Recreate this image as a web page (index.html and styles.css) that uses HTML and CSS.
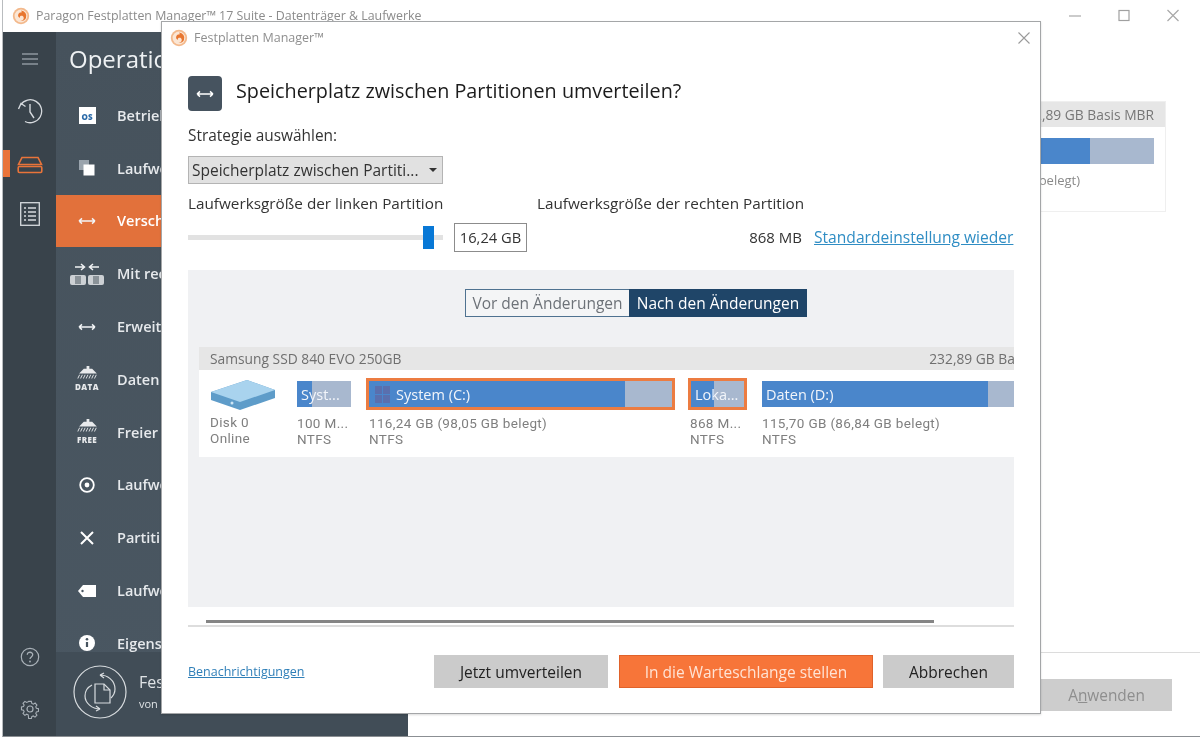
FILE: index.html
```html
<!DOCTYPE html>
<html lang="de">
<head>
<meta charset="utf-8">
<title>Paragon Festplatten Manager</title>
<link rel="stylesheet" href="styles.css">
</head>
<body>
<svg class="defs" width="0" height="0" aria-hidden="true">
  <symbol id="logo" viewBox="0 0 18 18">
    <circle cx="9" cy="9" r="8.2" fill="#f3b98c"/>
    <circle cx="9" cy="9" r="6.4" fill="#fbe6d4"/>
    <path d="M9 3.5a5.5 5.5 0 0 1 5 7.5c-1 2.2-3.400 3.400-5.500 3 2.500-.5 3.500-2 3.200-3.600-.3-1.300-1.500-2-2.700-1.600-1 .3-1.500 1.400-1 2.200-1.700-.5-2.300-2.200-1.700-3.700C6.800 6 8 5.200 10 5.300 9.500 4.600 9.300 4 9 3.500z" fill="#e8762f"/>
  </symbol>
  <symbol id="dbl" viewBox="0 0 18 8">
    <path d="M1 4h16M1 4l3-2.600M1 4l3 2.600M17 4l-3-2.600M17 4l-3 2.600" fill="none" stroke="currentColor" stroke-width="1.500"/>
  </symbol>
  <symbol id="hdd" viewBox="0 0 26 18">
    <path d="M5 1.500h16l3.500 7h-23z" fill="none" stroke="currentColor" stroke-width="1.600"/>
    <rect x="1.200" y="10.500" width="23.600" height="6" rx="1.200" fill="none" stroke="currentColor" stroke-width="1.600"/>
  </symbol>
  <symbol id="hatch" viewBox="0 0 22 14">
    <path d="M7 3h3V0h3v3h3l5 5H2z" fill="currentColor"/>
    <path d="M2 9.500l-2 4h1l2-4zm3 0l-2 4h1l2-4zm3 0l-2 4h1l2-4zm3 0l-2 4h1l2-4zm3 0l-2 4h1l2-4zm3 0l-2 4h1l2-4zm3 0l-2 4h1l2-4z" fill="currentColor"/>
  </symbol>
</svg>

<div class="desktop">
  <div class="window">
    <header class="titlebar">
      <svg class="logo"><use href="#logo"/></svg>
      <span class="titlebar-text">Paragon Festplatten Manager™ 17 Suite - Datenträger &amp; Laufwerke</span>
      <div class="win-controls">
        <svg width="16" height="16" viewBox="0 0 16 16"><path d="M2 8h12" stroke="#a8a8a8" stroke-width="1.200"/></svg>
        <svg width="16" height="16" viewBox="0 0 16 16"><rect x="3" y="2.500" width="10" height="10" fill="none" stroke="#a0a0a0" stroke-width="1.200"/></svg>
        <svg width="16" height="16" viewBox="0 0 16 16"><path d="M2.500 2l11 11M13.500 2l-11 11" stroke="#a8a8a8" stroke-width="1.200"/></svg>
      </div>
    </header>
    <div class="workspace">
      <nav class="rail">
        <svg class="rail-icon rail-menu" width="18" height="14" viewBox="0 0 18 14"><path d="M1 2h16M1 7h16M1 12h16" stroke="#8d979f" stroke-width="1.400"/></svg>
        <svg class="rail-icon rail-clock" width="26" height="26" viewBox="0 0 26 26"><path d="M3.500 7A11.500 11.500 0 1 1 8 23.500" fill="none" stroke="#d6dade" stroke-width="1.300"/><path d="M1.500 11L4 5.500l4.500 3M13 6v8l4 6" fill="none" stroke="#d6dade" stroke-width="1.400"/></svg>
        <div class="rail-active">
          <span class="rail-marker"></span>
          <svg class="rail-hdd"><use href="#hdd"/></svg>
        </div>
        <svg class="rail-icon rail-list" width="20" height="24" viewBox="0 0 20 24"><rect x=".7" y=".7" width="18.600" height="22.600" fill="none" stroke="#d6dade" stroke-width="1.300"/><path d="M4 6h2M8 6h8M4 10h2M8 10h8M4 14h2M8 14h8M4 18h2M8 18h8" stroke="#d6dade" stroke-width="1.500"/></svg>
        <div class="rail-spacer"></div>
        <svg class="rail-icon rail-help" width="20" height="20" viewBox="0 0 20 20"><circle cx="10" cy="10" r="8.700" fill="none" stroke="#a9b1b8" stroke-width="1.200"/><path d="M7.300 7.800c0-3.500 5.600-3.300 5.400 0 0 2.200-2.700 2-2.700 4.200" fill="none" stroke="#a9b1b8" stroke-width="1.300"/><circle cx="10" cy="14.500" r=".9" fill="#a9b1b8"/></svg>
        <svg class="rail-icon rail-gear" width="20" height="20" viewBox="0 0 20 20"><path d="M8.500 1.500h3l.5 2.300 1.700.8 2-1.200 2 2.200-1.300 1.900.7 1.700 2.300.5v3l-2.300.5-.7 1.700 1.300 2-2.100 2.100-2-1.300-1.600.7-.5 2.300h-3L8 16.500l-1.700-.7-2 1.300-2.100-2.100 1.300-2-.7-1.700-2.300-.5v-3l2.300-.5.7-1.700-1.300-1.900 2.100-2.200 2 1.200 1.700-.8z" transform="translate(1 1) scale(.9)" fill="none" stroke="#a9b1b8" stroke-width="1.200"/><circle cx="10" cy="10" r="3" fill="none" stroke="#a9b1b8" stroke-width="1.200"/></svg>
      </nav>
      <aside class="panel">
        <h1 class="panel-title">Operationen</h1>
        <ul class="op-list">
          <li class="op"><span class="op-icon"><span class="os-icon">OS</span></span><span>Betriebssystem</span></li>
          <li class="op"><span class="op-icon"><svg width="16" height="16" viewBox="0 0 16 16"><rect x="0" y="0" width="10" height="10" fill="#9aa4ad"/><rect x="4.500" y="4.500" width="11" height="11" fill="#fff"/></svg></span><span>Laufwerk</span></li>
          <li class="op op-active"><span class="op-icon"><svg class="dbl"><use href="#dbl"/></svg></span><span>Verschieben</span></li>
          <li class="op"><span class="op-icon"><svg width="36" height="22" viewBox="0 0 36 22"><path d="M6 4h9M12 1l3.500 3L12 7M30 4h-9M24 1l-3.500 3L24 7" fill="none" stroke="#f0f2f4" stroke-width="1.500"/><rect x="1" y="12" width="16" height="10" rx="2" fill="#ccd0d4"/><rect x="19" y="12" width="16" height="10" rx="2" fill="#ccd0d4"/><rect x="6" y="13" width="6" height="8" fill="#8a9298"/><rect x="24" y="13" width="6" height="8" fill="#8a9298"/></svg></span><span>Mit rechter</span></li>
          <li class="op"><span class="op-icon"><svg class="dbl"><use href="#dbl"/></svg></span><span>Erweitern</span></li>
          <li class="op"><span class="op-icon op-stack"><svg class="hatch"><use href="#hatch"/></svg><span class="op-tag">DATA</span></span><span>Daten</span></li>
          <li class="op"><span class="op-icon op-stack"><svg class="hatch"><use href="#hatch"/></svg><span class="op-tag">FREE</span></span><span>Freier</span></li>
          <li class="op"><span class="op-icon"><svg width="16" height="16" viewBox="0 0 16 16"><circle cx="8" cy="8" r="6.800" fill="none" stroke="#fff" stroke-width="1.800"/><circle cx="8" cy="8" r="2.400" fill="#fff"/></svg></span><span>Laufwerk</span></li>
          <li class="op"><span class="op-icon"><svg width="14" height="14" viewBox="0 0 14 14"><path d="M1 1l12 12M13 1L1 13" stroke="#fff" stroke-width="2"/></svg></span><span>Partition</span></li>
          <li class="op"><span class="op-icon"><svg width="18" height="12" viewBox="0 0 18 12"><path d="M5 0h13v12H5L0 6z" fill="#fff"/><circle cx="4.500" cy="6" r="1.200" fill="#4a5762"/></svg></span><span>Laufwerk</span></li>
          <li class="op"><span class="op-icon"><svg width="16" height="16" viewBox="0 0 16 16"><circle cx="8" cy="8" r="8" fill="#fff"/><path d="M8 7v5" stroke="#46535f" stroke-width="2.200"/><circle cx="8" cy="4.300" r="1.300" fill="#46535f"/></svg></span><span>Eigenschaften</span></li>
        </ul>
        <div class="panel-foot">
          <svg class="foot-icon" width="54" height="54" viewBox="0 0 54 54"><g fill="none" stroke="#d8dcdf" stroke-width="1.200"><circle cx="27" cy="27" r="26"/><path d="M22 19h9l6 6v13H22z"/><path d="M31 19v6h6"/><path d="M27 10c7 0 15 5 15 14 0 4-2 7-4 9M27 10l4-2M27 10l4 3"/><path d="M27 44c-8 0-15-6-15-13 0-5 3-9 7-11M27 44l-4 2M27 44l-4-3"/></g></svg>
          <div class="foot-text">
            <div class="foot-name">Fest</div>
            <div class="foot-by">von</div>
          </div>
        </div>
      </aside>
      <main class="content">
        <div class="content-top">
          <section class="bg-card">
            <div class="bg-card-head">232,89 GB Basis MBR</div>
            <div class="bg-bar"><span class="bg-bar-used"></span></div>
            <div class="bg-note">(86,84 GB belegt)</div>
          </section>
        </div>
        <footer class="content-foot">
          <button class="apply" type="button">A<u>n</u>wenden</button>
        </footer>
      </main>
    </div>
  </div>

  <div class="dialog">
    <div class="dialog-title">
      <svg class="logo"><use href="#logo"/></svg>
      <span>Festplatten Manager™</span>
      <svg class="dialog-close" width="14" height="14" viewBox="0 0 14 14"><path d="M1.500 1.500l11 11M12.500 1.500l-11 11" stroke="#9a9a9a" stroke-width="1.100"/></svg>
    </div>
    <div class="dialog-body">
      <div class="question">
        <span class="question-icon"><svg class="dbl"><use href="#dbl"/></svg></span>
        <h2>Speicherplatz zwischen Partitionen umverteilen?</h2>
      </div>
      <div class="strategy-label">Strategie auswählen:</div>
      <div class="select"><span>Speicherplatz zwischen Partiti...</span><i class="caret"></i></div>
      <div class="size-labels"><span class="size-left">Laufwerksgröße der linken Partition</span><span>Laufwerksgröße der rechten Partition</span></div>
      <div class="size-row">
        <div class="slider"><span class="thumb"></span></div>
        <div class="size-input">16,24 GB</div>
        <span class="size-right">868 MB</span>
        <a class="link">Standardeinstellung wieder</a>
      </div>
      <section class="preview">
        <div class="toggle">
          <span class="toggle-off">Vor den Änderungen</span><span class="toggle-on">Nach den Änderungen</span>
        </div>
        <div class="disk-view">
          <div class="disk-card">
            <div class="disk-head"><span>Samsung SSD 840 EVO 250GB</span><span>232,89 GB Basis MBR</span></div>
            <div class="disk-row">
              <div class="disk-cell">
                <svg class="disk-pic" width="66" height="32" viewBox="0 0 66 32"><path d="M1 13L37 1l28 10v8L30 31 1 21z" fill="#5e9cc9"/><path d="M1 13L37 1l28 10-35 12z" fill="#a9d3ee"/><circle cx="22" cy="24" r="1.500" fill="#cfe6f5"/></svg>
                <div class="cell-text"><div>Disk 0</div><div>Online</div></div>
              </div>
              <div class="part p1">
                <div class="bar"><span class="used u1"></span><span class="bar-label">Syst...</span></div>
                <div class="cell-text"><div>100 M...</div><div>NTFS</div></div>
              </div>
              <div class="part p2">
                <div class="bar sel"><span class="used u2"></span><svg class="win-mark" width="15" height="17" viewBox="0 0 15 17"><path d="M0 0h7v8H0zM8 0h7v8H8zM0 9h7v8H0zM8 9h7v8H8z" fill="#5a6fae"/></svg><span class="bar-label">System (C:)</span></div>
                <div class="cell-text"><div>116,24 GB (98,05 GB belegt)</div><div>NTFS</div></div>
              </div>
              <div class="part p3">
                <div class="bar sel"><span class="used u3"></span><span class="bar-label">Loka...</span></div>
                <div class="cell-text"><div>868 M...</div><div>NTFS</div></div>
              </div>
              <div class="part p4">
                <div class="bar"><span class="used u4"></span><span class="bar-label">Daten (D:)</span></div>
                <div class="cell-text"><div>115,70 GB (86,84 GB belegt)</div><div>NTFS</div></div>
              </div>
            </div>
          </div>
        </div>
      </section>
      <div class="scroll-track"><span class="scroll-thumb"></span></div>
      <div class="actions">
        <a class="notify">Benachrichtigungen</a>
        <button class="btn" type="button">Jetzt umverteilen</button>
        <button class="btn btn-primary" type="button">In die Warteschlange stellen</button>
        <button class="btn btn-cancel" type="button">Abbrechen</button>
      </div>
    </div>
  </div>
</div>
</body>
</html>
```
FILE: styles.css
```css
* { box-sizing: border-box; }
html, body { margin: 0; height: 100%; overflow: hidden; background: #fff; }
body { font-family: "Open Sans", "Noto Sans", "Liberation Sans", sans-serif; color: #333; }
.defs { position: absolute; }
.desktop { position: relative; width: 1200px; height: 737px; filter: blur(.45px); padding-left: 2px; }

.window { height: 737px; display: flex; flex-direction: column; background: #fff; border-left: 1px solid #b9bcbf; border-bottom: 1px solid #8b8f93; }
.titlebar { height: 32px; flex: none; display: flex; align-items: center; padding: 0 0 1px 9px; }
.logo { width: 18px; height: 18px; flex: none; }
.titlebar-text { margin-left: 6px; font-size: 12.400px; color: #8b8b8b; white-space: nowrap; }
.win-controls { margin-left: auto; display: flex; gap: 33px; padding-right: 19px; }

.workspace { flex: 1; display: flex; min-height: 0; }
.rail { width: 53px; flex: none; background: #39434b; display: flex; flex-direction: column; align-items: center; position: relative; }
.rail-icon { flex: none; }
.rail-menu { margin-top: 20px; }
.rail-clock { margin-top: 32px; }
.rail-active { width: 100%; height: 27px; margin-top: 26px; display: flex; align-items: center; justify-content: center; position: relative; flex: none; }
.rail-marker { position: absolute; left: 0; top: 0; width: 7px; height: 27px; background: #e9743a; }
.rail-hdd { width: 26px; height: 18px; color: #e9743a; margin-top: 2px; }
.rail-list { margin-top: 25px; }
.rail-spacer { flex: 1; }
.rail-help { margin-bottom: 32px; }
.rail-gear { margin-bottom: 17px; }

.panel { width: 352px; flex: none; display: flex; flex-direction: column; background: linear-gradient(#46525c, #4a5762); color: #fff; }
.panel-title { margin: 0; height: 57px; flex: none; padding: 9px 0 0 13px; font-size: 24px; line-height: 36px; font-weight: 400; color: #eef1f3; white-space: nowrap; }
.op-list { list-style: none; margin: 0; padding: 0; flex: 1; min-height: 0; overflow: hidden; }
.op { height: 52.800px; display: flex; align-items: center; padding-left: 12px; font-size: 14.500px; font-weight: 600; color: #e6e9ec; }
.op-active { background: #e2713b; color: #fff; }
.op-icon { width: 38px; flex: none; display: flex; align-items: center; justify-content: center; margin-right: 11px; color: #f2f4f6; }
.dbl { width: 18px; height: 8px; }
.os-icon { width: 17px; height: 17px; background: #fff; color: #2b6aa8; font-size: 8px; font-weight: 800; line-height: 20px; text-align: center; display: block; }
.op-stack { flex-direction: column; }
.hatch { width: 21px; height: 13px; color: #e8eaec; }
.op-tag { font-size: 8px; line-height: 10px; font-weight: 800; letter-spacing: .4px; color: #e8eaec; margin-top: 3px; }
.panel-foot { height: 84px; flex: none; display: flex; align-items: center; background: #414d57; padding-left: 17px; }
.foot-icon { flex: none; margin-top: -4px; }
.foot-text { margin-left: 12px; color: #dfe3e6; white-space: nowrap; margin-top: -4px; }
.foot-name { font-size: 16px; line-height: 26px; margin-top: -2px; }
.foot-by { font-size: 11px; line-height: 18px; }

.content { flex: 1; display: flex; flex-direction: column; min-width: 0; }
.content-top { height: 620px; flex: none; padding: 69px 34px 0 0; display: flex; justify-content: flex-end; }
.bg-card { width: 320px; height: 111px; border: 1px solid #efefef; font-size: 13.800px; color: #777; }
.bg-card-head { height: 25px; background: #e6e6e6; text-align: right; padding-right: 11px; line-height: 25px; white-space: nowrap; }
.bg-bar { height: 26px; margin: 11px 11px 0 0; background: #a8b8cf; }
.bg-bar-used { display: block; height: 100%; width: 243px; background: #4a86cb; }
.bg-note { text-align: right; margin: 7px 85px 0 0; font-size: 13px; color: #8a8a8a; }
.content-foot { flex: 1; border-top: 1px solid #dcdcdc; padding: 26px 28px 0 0; display: flex; justify-content: flex-end; align-items: flex-start; }
.apply { width: 300px; height: 32px; border: 0; background: #cdcdcd; color: #8e8e8e; font: 400 15.400px "Open Sans", sans-serif; padding: 0 0 0 169px; text-align: center; }

.dialog { position: absolute; left: 161px; top: 21px; width: 880px; height: 693px; background: #fff; border: 1px solid #a4a6a8; box-shadow: 0 1px 2px rgba(0,0,0,.15); display: flex; flex-direction: column; }
.dialog-title { height: 31px; flex: none; display: flex; align-items: center; padding-left: 8px; font-size: 12.500px; color: #8f8f8f; }
.dialog-title span { margin-left: 6px; }
.dialog-close { margin-left: auto; margin-right: 9px; }
.dialog-body { flex: 1; padding: 23px 26px 0; display: flex; flex-direction: column; min-height: 0; }
.question { display: flex; align-items: center; gap: 14px; height: 35px; flex: none; }
.question-icon { width: 34px; height: 35px; background: #46535f; border-radius: 4px; color: #fff; display: flex; align-items: center; justify-content: center; }
.question h2 { margin: 0 0 6px; font-size: 19.800px; line-height: 28px; font-weight: 400; color: #1c1c1c; white-space: nowrap; }
.strategy-label { margin-top: 14px; font-size: 15.400px; line-height: 22px; color: #333; flex: none; }
.select { width: 255px; height: 28px; margin-top: 9px; background: #e1e1e1; border: 1px solid #b4b4b4; display: flex; align-items: center; padding: 0 5px 0 3px; font-size: 15.500px; color: #333; flex: none; white-space: nowrap; }
.caret { margin-left: auto; width: 0; height: 0; border: 4px solid transparent; border-top: 4px solid #333; border-bottom: 0; }
.size-labels { display: flex; margin-top: 8px; font-size: 15.300px; line-height: 22px; color: #333; flex: none; white-space: nowrap; }
.size-left { width: 349px; }
.size-row { display: flex; align-items: center; height: 30px; margin-top: 8px; flex: none; }
.slider { width: 255px; height: 5px; background: #e2e2e2; position: relative; flex: none; }
.thumb { position: absolute; left: 235px; top: -9px; width: 11px; height: 23px; background: #0878d6; }
.size-input { width: 73px; height: 29px; margin-left: 11px; border: 1px solid #8c8c8c; font-size: 14.700px; line-height: 27px; text-align: center; color: #333; flex: none; }
.size-right { margin-left: auto; font-size: 15px; color: #333; }
.link { margin-left: 12px; width: 200px; font-size: 15.600px; color: #2f8dc4; text-decoration: underline; white-space: nowrap; }

.preview { height: 337px; margin-top: 18px; background: #f0f1f3; flex: none; display: flex; flex-direction: column; }
.toggle { align-self: flex-start; margin: 19px 0 0 277px; display: flex; height: 28px; font-size: 15.500px; line-height: 26px; flex: none; white-space: nowrap; }
.toggle-off { width: 164px; border: 1px solid #4f7290; border-right: 0; color: #6d7278; text-align: center; background: #f4f5f6; }
.toggle-on { width: 178px; background: #1f4568; color: #fff; text-align: center; line-height: 28px; }
.disk-view { margin: 30px 0 0 11px; overflow: hidden; flex: none; }
.disk-card { width: 877px; height: 110px; background: #fff; }
.disk-head { height: 23px; background: #e6e6e6; display: flex; justify-content: space-between; padding: 0 11px; font-size: 13.800px; line-height: 23px; color: #6f6f6f; white-space: nowrap; }
.disk-row { display: flex; padding-left: 11px; }
.disk-cell { width: 87px; flex: none; padding-top: 9px; }
.disk-pic { display: block; }
.disk-cell .cell-text { margin-top: 3px; margin-left: 0; }
.cell-text { font-family: Roboto, "Open Sans", sans-serif; font-size: 13.500px; letter-spacing: .35px; line-height: 16px; color: #7f7f7f; white-space: nowrap; }
.part { flex: none; padding-top: 8px; }
.p1 { width: 54px; margin-right: 15px; }
.p2 { width: 309px; margin-right: 13px; }
.p3 { width: 59px; margin-right: 15px; }
.p4 { width: 293px; }
.p2 .cell-text { margin-left: 3px; }
.p3 .cell-text { margin-left: 2px; }
.part .cell-text { margin-top: 5px; }
.bar { height: 32px; position: relative; background: #a8b8cf; display: flex; align-items: center; border-top: 3px solid #fff; border-bottom: 3px solid #fff; overflow: hidden; background-clip: padding-box; }
.bar.sel { border: 3px solid #ec7c41; background-clip: border-box; }
.used { position: absolute; left: 0; top: 0; bottom: 0; background: #4a86cb; }
.u1 { width: 15px; }
.u2 { width: 256px; }
.u3 { width: 23px; }
.u4 { width: 226px; }
.bar-label { position: relative; font-size: 14.500px; color: #f2f5fa; padding-left: 4px; white-space: nowrap; }
.p2 .bar-label { padding-left: 6px; }
.p4 .bar-label { padding-left: 4px; }
.win-mark { position: relative; margin-left: 6px; flex: none; }

.scroll-track { margin-top: 14px; height: 6px; flex: none; border-bottom: 2px solid #dddddd; position: relative; }
.scroll-thumb { position: absolute; left: 18px; top: -1px; width: 728px; height: 3px; background: #858585; }
.actions { flex: 1; display: flex; align-items: flex-start; padding-top: 28px; }
.notify { margin-top: 8px; font-size: 12.500px; color: #2f7fb8; text-decoration: underline; white-space: nowrap; }
.btn { height: 33px; border: 0; background: #cbcbcb; font: 400 15.500px "Open Sans", sans-serif; color: #222; padding: 0; }
.notify + .btn { margin-left: auto; width: 174px; }
.btn-primary { width: 254px; margin-left: 11px; background: #f77539; border: 1px solid #e0622a; color: #ffe3d4; }
.btn-cancel { width: 131px; margin-left: 10px; }
```
